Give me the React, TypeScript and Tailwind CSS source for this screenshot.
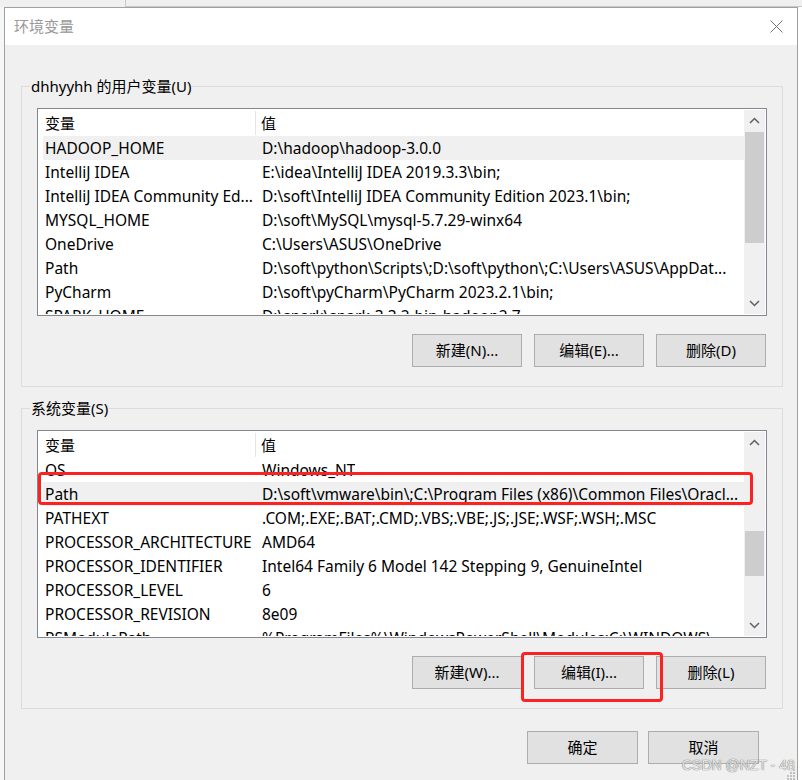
const USER_VARS: [string, string][] = [
  ["HADOOP_HOME", "D:\\hadoop\\hadoop-3.0.0"],
  ["IntelliJ IDEA", "E:\\idea\\IntelliJ IDEA 2019.3.3\\bin;"],
  ["IntelliJ IDEA Community Ed...", "D:\\soft\\IntelliJ IDEA Community Edition 2023.1\\bin;"],
  ["MYSQL_HOME", "D:\\soft\\MySQL\\mysql-5.7.29-winx64"],
  ["OneDrive", "C:\\Users\\ASUS\\OneDrive"],
  ["Path", "D:\\soft\\python\\Scripts\\;D:\\soft\\python\\;C:\\Users\\ASUS\\AppDat..."],
  ["PyCharm", "D:\\soft\\pyCharm\\PyCharm 2023.2.1\\bin;"],
  ["SPARK_HOME", "D:\\spark\\spark-3.3.2-bin-hadoop2.7"],
];

const SYSTEM_VARS: [string, string][] = [
  ["OS", "Windows_NT"],
  ["Path", "D:\\soft\\vmware\\bin\\;C:\\Program Files (x86)\\Common Files\\Oracl..."],
  ["PATHEXT", ".COM;.EXE;.BAT;.CMD;.VBS;.VBE;.JS;.JSE;.WSF;.WSH;.MSC"],
  ["PROCESSOR_ARCHITECTURE", "AMD64"],
  ["PROCESSOR_IDENTIFIER", "Intel64 Family 6 Model 142 Stepping 9, GenuineIntel"],
  ["PROCESSOR_LEVEL", "6"],
  ["PROCESSOR_REVISION", "8e09"],
  ["PSModulePath", "%ProgramFiles%\\WindowsPowerShell\\Modules;C:\\WINDOWS\\..."],
];

function Chevron({ up }: { up?: boolean }) {
  return (
    <svg width="11" height="7" viewBox="0 0 11 7" fill="none">
      <polyline
        points={up ? "1,6 5.5,1.5 10,6" : "1,1 5.5,5.5 10,1"}
        stroke="#606060"
        strokeWidth="1.5"
      />
    </svg>
  );
}

function Scrollbar({ thumbTop, thumbHeight }: { thumbTop: number; thumbHeight: number }) {
  return (
    <div className="flex w-[21px] flex-col bg-[#f0f0f0]">
      <div className="flex h-[21px] items-center justify-center">
        <Chevron up />
      </div>
      <div className="flex-1 overflow-hidden">
        <div className="mx-[1px] bg-[#cdcdcd]" style={{ marginTop: thumbTop, height: thumbHeight }} />
      </div>
      <div className="flex h-[21px] items-center justify-center">
        <Chevron />
      </div>
    </div>
  );
}

function ListView({
  rows,
  selected,
  scrolled,
  thumbTop,
  thumbHeight,
}: {
  rows: [string, string][];
  selected: number;
  scrolled?: boolean;
  thumbTop: number;
  thumbHeight: number;
}) {
  return (
    <div className="flex h-[208px] border border-[#828790] bg-white p-[1px]">
      <div className="flex min-w-0 flex-1 flex-col">
        <div className="ml-[4px] flex h-[26px] shrink-0 items-center">
          <div className="w-[212px] pl-[2px]">变量</div>
          <div className="h-[24px] w-px bg-[#e5e5e5]" />
          <div className="pl-[5px]">值</div>
        </div>
        <div className={"min-h-0 flex-1 overflow-hidden text-[15.5px] " + (scrolled ? "mt-[5px]" : "")}>
          <div className={scrolled ? "-mt-[5px]" : ""}>
            {rows.map(([name, value], i) => (
              <div
                key={name + i}
                className={
                  "ml-[4px] flex h-[24px] items-center whitespace-nowrap pt-[2px] " +
                  (i === selected ? "bg-[#f0f0f0]" : "")
                }
              >
                <div className="w-[213px] shrink-0 overflow-hidden pl-[2px]">{name}</div>
                <div className="min-w-0 overflow-hidden pl-[6px]">{value}</div>
              </div>
            ))}
          </div>
        </div>
      </div>
      <Scrollbar thumbTop={thumbTop} thumbHeight={thumbHeight} />
    </div>
  );
}

function Button({ label, wide }: { label: string; wide?: boolean }) {
  return (
    <div
      className={
        "flex h-[33px] items-center justify-center border border-[#adadad] bg-[#e1e1e1] " +
        (wide ? "w-[111px]" : "w-[110px]")
      }
    >
      {label}
    </div>
  );
}

function GroupBox({
  title,
  children,
  buttons,
}: {
  title: string;
  children: React.ReactNode;
  buttons: string[];
}) {
  return (
    <div className="relative border border-[#dcdcdc] px-[15px] pb-[19px] pt-[21px]">
      <span className="absolute -top-[11px] left-[8px] bg-[#f0f0f0] px-px leading-[20px]">{title}</span>
      {children}
      <div className="mr-[1px] mt-[18px] flex justify-end gap-[12px]">
        {buttons.map((b) => (
          <Button key={b} label={b} />
        ))}
      </div>
    </div>
  );
}

export default function App() {
  return (
    <div className="relative h-[780px] w-[802px] overflow-hidden bg-[#f0f0f0] font-['Noto_Sans','Noto_Sans_CJK_SC',sans-serif] text-[15px] text-black">
      <div className="ml-[125px] h-[7px] border-b border-l border-[#c8c8c8]" />
      <div className="flex">
        <div className="w-[4px] bg-[#f7f7f7]" />
        <div className="flex h-[780px] w-[794px] shrink-0 flex-col border border-[#a0a0a0] bg-[#f0f0f0]">
          <div className="flex h-[37px] items-center justify-between bg-white pl-[9px] pr-[14px]">
            <span className="text-[#999999]">环境变量</span>
            <svg width="13" height="13" viewBox="0 0 13 13">
              <path d="M0.5 0.5 L12.5 12.5 M12.5 0.5 L0.5 12.5" stroke="#707070" strokeWidth="1" />
            </svg>
          </div>
          <div className="flex flex-col pl-[16px] pr-[14px] pt-[41px]">
            <GroupBox title="dhhyyhh 的用户变量(U)" buttons={["新建(N)...", "编辑(E)...", "删除(D)"]}>
              <ListView rows={USER_VARS} selected={0} thumbTop={1} thumbHeight={111} />
            </GroupBox>
            <div className="mt-[21px]">
              <GroupBox title="系统变量(S)" buttons={["新建(W)...", "编辑(I)...", "删除(L)"]}>
                <ListView rows={SYSTEM_VARS} selected={1} scrolled thumbTop={78} thumbHeight={45} />
              </GroupBox>
            </div>
            <div className="mr-[24px] mt-[22px] flex justify-end gap-[10px]">
              <Button label="确定" wide />
              <Button label="取消" wide />
            </div>
          </div>
        </div>
        <div className="flex-1 bg-white" />
      </div>

      <div className="absolute left-[38px] top-[472px] h-[33px] w-[715px] rounded-[4px] border-[3px] border-[#fd2222]" />
      <div className="absolute left-[521px] top-[652px] h-[50px] w-[142px] rounded-[4px] border-[3px] border-[#fd2222]" />

      <div className="absolute left-[682px] top-[756px] font-['Liberation_Sans',sans-serif] text-[14px] leading-[18px] text-[#e6e6e6] [text-shadow:0_0_1px_#7a7a7a,0_0_1px_#7a7a7a]">
        CSDN @NZT - 48
      </div>
      <svg className="absolute left-[786px] top-[768px]" width="10" height="12" viewBox="0 0 10 12">
        {[
          [8, 2],
          [8, 5],
          [5, 5],
          [8, 8],
          [5, 8],
          [2, 8],
          [8, 11],
          [5, 11],
          [2, 11],
        ].map(([x, y]) => (
          <rect key={x + "-" + y} x={x - 1} y={y - 1} width="2" height="2" fill="#c0c0c0" />
        ))}
      </svg>
    </div>
  );
}
